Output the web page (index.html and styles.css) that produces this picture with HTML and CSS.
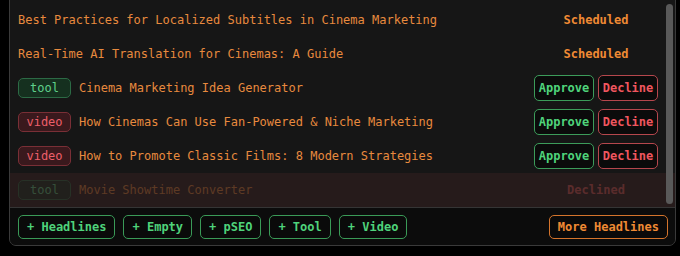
FILE: index.html
```html
<!DOCTYPE html>
<html>
<head>
<meta charset="utf-8">
<link rel="stylesheet" href="styles.css">
</head>
<body>
<div class="panel">
  <div class="list">
    <div class="row">
      <div class="main"><span class="title">Best Practices for Localized Subtitles in Cinema Marketing</span></div>
      <div class="status"><span class="sched">Scheduled</span></div>
    </div>
    <div class="row">
      <div class="main"><span class="title">Real-Time AI Translation for Cinemas: A Guide</span></div>
      <div class="status"><span class="sched">Scheduled</span></div>
    </div>
    <div class="row">
      <div class="main"><span class="tag tag-tool">tool</span><span class="title">Cinema Marketing Idea Generator</span></div>
      <div class="status"><button class="act approve">Approve</button><button class="act decline">Decline</button></div>
    </div>
    <div class="row">
      <div class="main"><span class="tag tag-video">video</span><span class="title">How Cinemas Can Use Fan-Powered &amp; Niche Marketing</span></div>
      <div class="status"><button class="act approve">Approve</button><button class="act decline">Decline</button></div>
    </div>
    <div class="row">
      <div class="main"><span class="tag tag-video">video</span><span class="title">How to Promote Classic Films: 8 Modern Strategies</span></div>
      <div class="status"><button class="act approve">Approve</button><button class="act decline">Decline</button></div>
    </div>
    <div class="row declined">
      <div class="main dim"><span class="tag tag-tool">tool</span><span class="title">Movie Showtime Converter</span></div>
      <div class="status dim"><span class="declined-label">Declined</span></div>
    </div>
    <div class="scrollbar"><div class="thumb"></div></div>
  </div>
  <div class="footer">
    <div class="adds">
      <button class="fbtn green">+ Headlines</button>
      <button class="fbtn green">+ Empty</button>
      <button class="fbtn green">+ pSEO</button>
      <button class="fbtn green">+ Tool</button>
      <button class="fbtn green">+ Video</button>
    </div>
    <button class="fbtn orange">More Headlines</button>
  </div>
</div>
</body>
</html>
```
FILE: styles.css
```css
html, body {
  margin: 0;
  padding: 0;
  background: #000;
  height: 256px;
  overflow: hidden;
  font-family: "DejaVu Sans Mono", "Liberation Mono", monospace;
  font-size: 12px;
}
.panel {
  margin: -9px 0 0 9px;
  width: 667px;
  box-sizing: border-box;
  border: 1px solid #3a3a3a;
  border-radius: 7px;
  background: #161616;
  overflow: hidden;
}
.list {
  position: relative;
  padding-top: 11px;
}
.row {
  height: 34px;
  display: flex;
  align-items: center;
  justify-content: space-between;
  padding: 0 17px 0 8px;
}
.row.declined {
  background: #261b1b;
}
.main {
  display: flex;
  align-items: center;
  gap: 8px;
  min-width: 0;
}
.dim { opacity: 0.28; }
.title {
  color: #e88a3e;
  white-space: nowrap;
}
.tag {
  box-sizing: border-box;
  width: 53px;
  height: 20px;
  line-height: 18px;
  border: 1px solid;
  border-radius: 5px;
  text-align: center;
}
.tag-tool {
  background: #15301f;
  border-color: #2c6a45;
  color: #5fd08b;
}
.tag-video {
  background: #3a191d;
  border-color: #7a2f36;
  color: #ec5f6a;
}
.status {
  width: 124px;
  display: flex;
  justify-content: center;
  align-items: center;
  gap: 4px;
}
.sched {
  color: #f08a34;
  font-weight: bold;
}
.declined-label {
  color: #e05a5a;
  font-weight: bold;
}
.act {
  box-sizing: border-box;
  width: 60px;
  font-family: inherit;
  font-size: 12px;
  font-weight: bold;
  height: 26px;
  padding: 0;
  background: #0b0b0b;
  border: 1px solid;
  border-radius: 5px;
  text-align: center;
}
.approve {
  color: #4fd37b;
  border-color: #3c9c5a;
}
.decline {
  color: #f0565f;
  border-color: #b6474d;
}
.scrollbar {
  position: absolute;
  right: 2px;
  top: 12px;
  bottom: 3px;
  width: 7px;
}
.thumb {
  height: 100%;
  border-radius: 4px;
  background: #595959;
}
.footer {
  border-top: 1px solid #353535;
  background: #0c0c0c;
  padding: 7px 7px 6px 8px;
  display: flex;
  justify-content: space-between;
  align-items: center;
}
.adds {
  display: flex;
  gap: 8px;
}
.fbtn {
  font-family: inherit;
  font-size: 12px;
  font-weight: bold;
  height: 24px;
  padding: 0 8px;
  background: #0a0a0a;
  border: 1px solid;
  border-radius: 5px;
}
.green {
  color: #4fd37b;
  border-color: #3a9a57;
}
.orange {
  color: #f08a34;
  border-color: #d4742c;
}
```
